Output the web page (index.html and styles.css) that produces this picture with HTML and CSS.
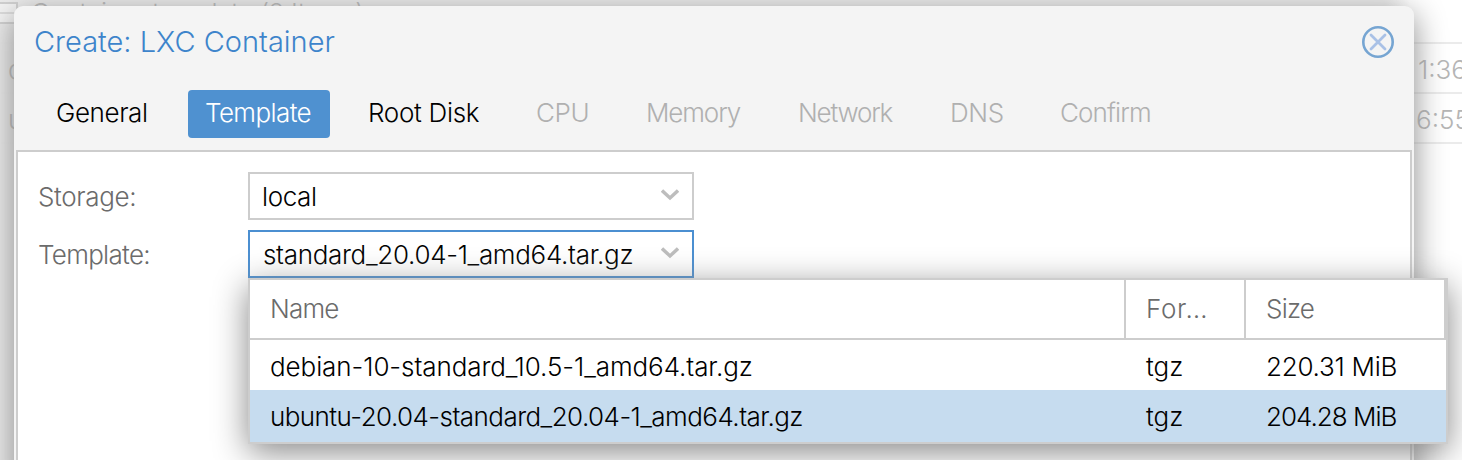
FILE: index.html
```html
<!DOCTYPE html>
<html lang="en">
<head>
<meta charset="utf-8">
<title>Create: LXC Container</title>
<link rel="stylesheet" href="styles.css">
</head>
<body>
<main class="page">
  <div class="backdrop">
    <div class="backdrop-head"><span class="backdrop-group">Container template (2 Items)</span><span class="group-toggle"></span></div>
    <div class="backdrop-row"><span>d</span><span class="time t1">1:36</span></div>
    <div class="backdrop-row"><span>u</span><span class="time t2">6:55</span></div>
  </div>
  <section class="dialog">
    <header class="dialog-header">
      <h1 class="title">Create: LXC Container</h1>
      <svg class="close" viewBox="0 0 32 32" width="32" height="32"><circle cx="16" cy="16" r="14.700" fill="none" stroke="#76a5d2" stroke-width="2.600"/><path d="M9 9L23 23M23 9L9 23" stroke="#a9c1e6" stroke-width="2.800" stroke-linecap="round"/></svg>
    </header>
    <nav class="tabs">
      <span class="tab general">General</span>
      <span class="tab active">Template</span>
      <span class="tab root">Root Disk</span>
      <span class="tab off cpu">CPU</span>
      <span class="tab off memory">Memory</span>
      <span class="tab off network">Network</span>
      <span class="tab off dns">DNS</span>
      <span class="tab off confirm">Confirm</span>
    </nav>
    <div class="panel">
      <div class="field"><label class="label l-storage">Storage:</label><div class="combo"><span class="v-local">local</span><svg class="arrow" viewBox="0 0 18 12" width="18" height="12"><path d="M1 1.500L9 9L17 1.500" fill="none" stroke="#bdbdbd" stroke-width="3.400"/></svg></div></div>
      <div class="field"><label class="label l-template">Template:</label><div class="combo focused"><span class="v-template">standard_20.04-1_amd64.tar.gz</span><svg class="arrow" viewBox="0 0 18 12" width="18" height="12"><path d="M1 1.500L9 9L17 1.500" fill="none" stroke="#bdbdbd" stroke-width="3.400"/></svg></div></div>
    </div>
  </section>
  <div class="picker">
    <div class="row head"><span class="cell"><b class="h-name">Name</b></span><span class="cell"><b class="h-for">For…</b></span><span class="cell"><b class="h-size">Size</b></span></div>
    <div class="row"><span class="cell"><b class="r-debian">debian-10-standard_10.5-1_amd64.tar.gz</b></span><span class="cell"><b class="r-tgz">tgz</b></span><span class="cell"><b class="r-size">220.31 MiB</b></span></div>
    <div class="row selected"><span class="cell"><b class="r-ubuntu">ubuntu-20.04-standard_20.04-1_amd64.tar.gz</b></span><span class="cell"><b class="r-tgz">tgz</b></span><span class="cell"><b class="r-size2">204.28 MiB</b></span></div>
  </div>
</main>
</body>
</html>
```
FILE: styles.css
```css
* { box-sizing: border-box; }
body { margin: 0; font: 300 26px/30px Inter, "Liberation Sans", sans-serif; color: #000; }
b { font-weight: 300; }
.page { position: relative; width: 1462px; height: 460px; overflow: hidden; background: linear-gradient(90deg, #ececec 0 1385px, #fff 1410px); }
.backdrop { color: #b5b5b5; }
.backdrop-head { position: relative; height: 42px; padding: 0 0 0 31px; line-height: 25px; }
.backdrop-group { letter-spacing: -.38px; }
.group-toggle { position: absolute; left: -12px; top: 2px; width: 30px; height: 22px; border: 2px solid #d0d0d0; background: linear-gradient(#f5f5f5 0 8px, #dcdcdc 8px 10px, #f5f5f5 10px); }
.backdrop-row { display: flex; justify-content: space-between; height: 50px; padding: 11px 0 0 8px; border-top: 2px solid #ebebeb; white-space: nowrap; }
.backdrop-row:first-of-type { border-top: 2px solid #ebebeb; }
.backdrop-row:last-child { height: 52px; border-bottom: 2px solid #ebebeb; }
.time { width: 44px; }
.t2 { width: 46px; }
.dialog { position: absolute; left: 14px; top: 6px; width: 1400px; height: 480px; padding: 0 2px; background: #f4f4f4; border-radius: 9px 9px 0 0; box-shadow: 0 8px 32px #888; }
.dialog-header { display: flex; justify-content: space-between; align-items: flex-start; height: 84px; padding: 20px 18px 0; }
.title { margin: 0; font-size: 29px; line-height: 32px; font-weight: 300; color: #3d84cb; white-space: nowrap; }
.tabs { display: flex; height: 60px; padding-left: 22px; }
.tab { height: 48px; margin-right: 20px; padding: 8px 18px; white-space: nowrap; border-radius: 4px; }
.tab.active { padding-left: 17px; background: #4f91d0; color: #fff; }
.off { color: #b0b0b0; }
.general { width: 130px; letter-spacing: -.4px; }
.active { width: 142px; letter-spacing: -.6px; }
.root { width: 148px; letter-spacing: -.3px; }
.cpu { width: 90px; letter-spacing: -.4px; }
.memory { width: 132px; letter-spacing: -1.1px; }
.network { width: 132px; letter-spacing: -1.2px; }
.dns { width: 90px; letter-spacing: -.4px; }
.confirm { width: 130px; letter-spacing: -.9px; }
.panel { display: flex; flex-direction: column; gap: 10px; height: 330px; padding: 20px; background: #fff; border: 2px solid #cdcdcd; }
.field { display: flex; align-items: center; }
.label { width: 210px; padding-top: 2px; color: #6b6b6b; letter-spacing: -.35px; }
.l-template { letter-spacing: -.7px; }
.combo { display: flex; align-items: center; justify-content: space-between; width: 446px; height: 48px; padding: 2px 13px 0 12px; border: 2px solid #cdcdcd; white-space: nowrap; }
.combo.focused { border-color: #4b8fd1; }
.v-local { letter-spacing: -.4px; }
.v-template { padding-left: 1px; letter-spacing: -.31px; }
.arrow { margin-top: -5px; }
.picker { position: absolute; left: 248px; top: 278px; width: 1200px; height: 166px; background: #fff; border: 2px solid #cdcdcd; box-shadow: 0 8px 32px #888; }
.row { display: grid; grid-template-columns: 876px 120px 200px; height: 50px; white-space: nowrap; }
.cell { padding: 12px 0 0 20px; }
.head { height: 60px; color: #6b6b6b; border-bottom: 2px solid #cdcdcd; }
.head .cell { padding-top: 14px; border-right: 2px solid #cdcdcd; }
.selected { height: 52px; background: #c6dcef; }
.h-name { letter-spacing: -.8px; }
.h-for { letter-spacing: .7px; }
.h-size { letter-spacing: -.8px; }
.r-debian { letter-spacing: -.08px; }
.r-ubuntu { letter-spacing: -.55px; }
.r-size { letter-spacing: -.25px; }
.r-size2 { letter-spacing: -1px; }
```
